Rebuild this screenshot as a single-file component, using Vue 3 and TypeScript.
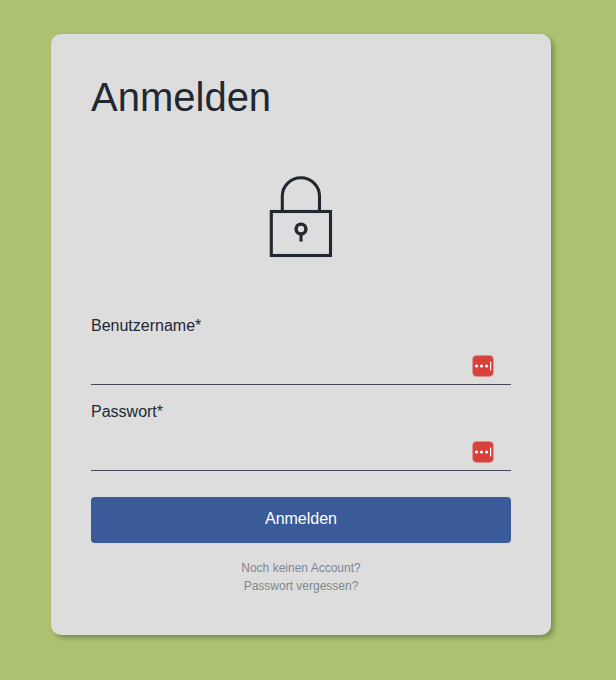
<script setup lang="ts">
interface Field { id: string; label: string; type: string }
const fields: Field[] = [
  { id: 'username', label: 'Benutzername*', type: 'text' },
  { id: 'password', label: 'Passwort*', type: 'password' },
]
</script>

<template>
  <main class="page">
    <form class="card" @submit.prevent>
      <h1 class="title">Anmelden</h1>
      <svg class="lock" viewBox="0 0 64 84" fill="none" stroke="#212831" stroke-width="3.1">
        <path d="M13.3 36V21.3a18.6 18.6 0 0 1 37.2 0V36" />
        <rect x="2.3" y="36.5" width="59.2" height="44" />
        <circle cx="32" cy="54" r="4.9" stroke-width="3.4" />
        <path d="M32 59v7.5" />
      </svg>
      <div v-for="field in fields" :key="field.id" class="field">
        <label class="label" :for="field.id">{{ field.label }}</label>
        <div class="control">
          <input :id="field.id" class="input" :type="field.type" />
          <svg class="badge" viewBox="0 0 22 22">
            <rect x="0.6" y="0.6" width="20.8" height="20.8" rx="3.8" fill="#d8403a" stroke="#d9908e" stroke-width="0.6" />
            <g fill="#fff">
              <circle cx="4.5" cy="11" r="1.6" />
              <circle cx="9.5" cy="11" r="1.6" />
              <circle cx="14.6" cy="11" r="1.6" />
              <rect x="18" y="6.7" width="1.2" height="8.6" />
            </g>
          </svg>
        </div>
      </div>
      <button class="submit" type="submit">Anmelden</button>
      <div class="links">
        <a>Noch keinen Account?</a>
        <a>Passwort vergessen?</a>
      </div>
    </form>
  </main>
</template>

<style>
body { background: #acc270; }
</style>

<style scoped>
.page {
  box-sizing: border-box;
  height: 680px;
  padding: 34px 65px 45px 51px;
  font-family: "Liberation Sans", Arial, sans-serif;
  color: #212831;
}
.card {
  box-sizing: border-box;
  display: flex;
  flex-direction: column;
  width: 500px;
  height: 601px;
  padding: 40px;
  border-radius: 10px;
  background: #ddd;
  box-shadow: 3px 3px 5px rgba(0, 0, 0, 0.28);
}
.title { margin: 0; font-size: 40px; font-weight: 400; line-height: 46px; }
.lock { width: 64px; height: 84px; margin: 55px auto 58px; }
.field { height: 86px; }
.label { display: block; font-size: 16px; line-height: 18px; }
.control {
  box-sizing: border-box;
  display: flex;
  align-items: center;
  height: 38px;
  margin-top: 12px;
  padding-right: 17px;
  border-bottom: 1px solid #434854;
}
.input { flex: 1; min-width: 0; padding: 0; border: 0; outline: 0; background: transparent; }
.badge { width: 22px; height: 22px; }
.submit {
  height: 46px;
  margin-top: 8px;
  padding: 0 0 2px;
  border: 0;
  border-radius: 4px;
  background: #3a5a99;
  color: #fff;
  font: 16px "Liberation Sans", Arial, sans-serif;
}
.links {
  display: flex;
  flex-direction: column;
  align-items: center;
  margin-top: 16px;
  font-size: 12px;
  line-height: 18px;
  color: #7d868e;
}
</style>
